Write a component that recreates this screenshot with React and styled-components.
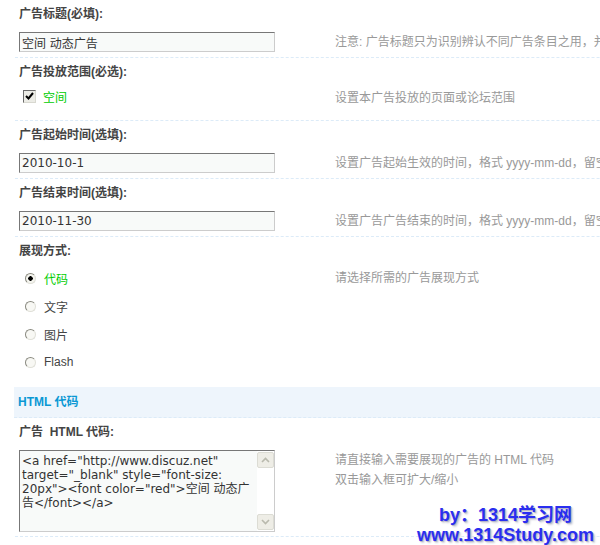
import React from 'react';
import styled, { createGlobalStyle } from 'styled-components';

const GlobalStyle = createGlobalStyle`
  html, body { margin: 0; padding: 0; background: #fff; }
  body {
    font-family: "Liberation Sans", "Noto Sans CJK SC", sans-serif;
    font-size: 12px;
    color: #333;
    overflow: hidden;
  }
`;

const timeTip = (what) =>
    `设置广告${what}的时间，格式 yyyy-mm-dd，留空为不限制${what.slice(-2)}时间`;

const modes = [
    { name: '代码', on: true },
    { name: '文字' },
    { name: '图片' },
    { name: 'Flash' },
];

const App = () => (
    <Page>
        <GlobalStyle />
        <Form>
            <Section>
                <Title>广告标题(必填):</Title>
                <Field>
                    <Control><TextInput defaultValue="空间 动态广告" /></Control>
                    <Hint>注意: 广告标题只为识别辨认不同广告条目之用，并不会在广告中显示</Hint>
                </Field>
            </Section>

            <Section>
                <Title>广告投放范围(必选):</Title>
                <Field>
                    <Choices $top={2} $bottom={14}>
                        <Choice $h={20}>
                            <CheckBox>
                                <svg width="9" height="8" viewBox="0 0 9 8">
                                    <path d="M1 4 L3.5 6.5 L8 1" stroke="#000" strokeWidth="2" fill="none" />
                                </svg>
                            </CheckBox>
                            <ChoiceText $on>空间</ChoiceText>
                        </Choice>
                    </Choices>
                    <Hint $top={4}>设置本广告投放的页面或论坛范围</Hint>
                </Field>
            </Section>

            <Section>
                <Title>广告起始时间(选填):</Title>
                <Field>
                    <Control><TextInput defaultValue="2010-10-1" /></Control>
                    <Hint>{timeTip('起始生效')}</Hint>
                </Field>
            </Section>

            <Section>
                <Title>广告结束时间(选填):</Title>
                <Field>
                    <Control><TextInput defaultValue="2010-11-30" /></Control>
                    <Hint>{timeTip('广告结束')}</Hint>
                </Field>
            </Section>

            <Section $noBorder>
                <Title>展现方式:</Title>
                <Field>
                    <Choices $top={1} $bottom={11}>
                        {modes.map((m) => (
                            <Choice key={m.name} $h={28}>
                                <Radio $on={m.on} />
                                <ChoiceText $on={m.on}>{m.name}</ChoiceText>
                            </Choice>
                        ))}
                    </Choices>
                    <Hint $top={5}>请选择所需的广告展现方式</Hint>
                </Field>
            </Section>

            <Band>HTML 代码</Band>

            <Section>
                <Title>广告&nbsp; HTML 代码:</Title>
                <Field>
                    <Control $bottom={4}>
                        <CodeBox>
                            <CodeArea
                                spellCheck={false}
                                defaultValue={'<a href="http://www.discuz.net" target="_blank" style="font-size: 20px"><font color="red">空间 动态广告</font></a>'}
                            />
                            <ScrollBar>
                                <ScrollButton>
                                    <svg width="9" height="6" viewBox="0 0 9 6">
                                        <path d="M1 5 L4.5 1.5 L8 5" stroke="#b9b9ad" strokeWidth="1.6" fill="none" />
                                    </svg>
                                </ScrollButton>
                                <ScrollButton>
                                    <svg width="9" height="6" viewBox="0 0 9 6">
                                        <path d="M1 1 L4.5 4.5 L8 1" stroke="#b9b9ad" strokeWidth="1.6" fill="none" />
                                    </svg>
                                </ScrollButton>
                            </ScrollBar>
                        </CodeBox>
                    </Control>
                    <Hint>
                        请直接输入需要展现的广告的 HTML 代码<br />
                        双击输入框可扩大/缩小
                    </Hint>
                </Field>
            </Section>
        </Form>

        <Watermark>
            <span>by：1314学习网</span>
            <span>www.1314Study.com</span>
        </Watermark>
    </Page>
);

export default App;

const Page = styled.div`
position: relative;
width: 600px;
height: 545px;
overflow: hidden;
padding-left: 15px;
box-sizing: border-box;
`;

const Form = styled.div`
width: 760px;
`;

const Section = styled.div`
border-bottom: ${(p) => (p.$noBorder ? 'none' : '1px dashed #dcebf8')};
`;

const Title = styled.div`
padding: 5px 4px 3px;
line-height: 18px;
font-weight: bold;
color: #444;
`;

const Field = styled.div`
display: grid;
grid-template-columns: 320px 1fr;
`;

const Control = styled.div`
padding: 6px 0 ${(p) => (p.$bottom ?? 5)}px 4px;
display: flex;
`;

const TextInput = styled.input`
width: 256px;
height: 20px;
box-sizing: border-box;
margin: 0;
padding: 0 2px;
border: 1px solid;
border-color: #777 #ccc #ccc #777;
background: #f8faf9;
font-family: "DejaVu Sans", "Noto Sans CJK SC", sans-serif;
font-size: 12px;
color: #333;
outline: none;
`;

const Hint = styled.div`
padding-top: ${(p) => p.$top ?? 6}px;
line-height: 20px;
color: #999;
white-space: nowrap;
`;

const Choices = styled.div`
padding: ${(p) => p.$top}px 0 ${(p) => p.$bottom}px 4px;
display: flex;
flex-direction: column;
`;

const Choice = styled.div`
height: ${(p) => p.$h}px;
display: flex;
align-items: center;
`;

const CheckBox = styled.span`
margin-left: 4px;
width: 13px;
height: 13px;
box-sizing: border-box;
border: 1px solid;
border-color: #6b6b6b #d8d8d0 #d8d8d0 #6b6b6b;
background: #ecece6;
display: flex;
align-items: center;
justify-content: center;
`;

const Radio = styled.span`
margin-left: 6px;
margin-right: 1px;
width: 11px;
height: 11px;
box-sizing: border-box;
border-radius: 50%;
border: 1px solid;
border-color: #8a8a80 #e0e0d8 #e0e0d8 #8a8a80;
background: ${(p) => (p.$on ? 'radial-gradient(circle, #000 0 2px, #f4f4ee 2.5px)' : '#f8f8f4')};
`;

const ChoiceText = styled.span`
margin-left: 7px;
color: ${(p) => (p.$on ? '#00cc00' : '#444')};
`;

const Band = styled.div`
height: 30px;
line-height: 30px;
padding-left: 4px;
margin-left: -1px;
background: #eef5fc;
color: #0a98d4;
font-weight: bold;
border-bottom: 1px dashed #dcebf8;
`;

const CodeBox = styled.div`
width: 256px;
height: 82px;
box-sizing: border-box;
border: 1px solid;
border-color: #777 #ccc #ccc #777;
background: #f8faf9;
display: flex;
`;

const CodeArea = styled.textarea`
flex: 1;
margin: 0;
padding: 3px 3px 2px 2px;
border: none;
background: transparent;
resize: none;
overflow: hidden;
font-family: "DejaVu Sans", "Noto Sans CJK SC", sans-serif;
font-size: 12px;
line-height: 14px;
color: #333;
outline: none;
`;

const ScrollBar = styled.div`
width: 17px;
background: #fff;
display: flex;
flex-direction: column;
justify-content: space-between;
padding: 1px 0;
`;

const ScrollButton = styled.div`
height: 16px;
box-sizing: border-box;
border: 1px solid #dcdcd4;
border-radius: 2px;
background: #eeede6;
display: flex;
align-items: center;
justify-content: center;
`;

const Watermark = styled.div`
position: absolute;
right: 6px;
bottom: 0;
display: flex;
flex-direction: column;
align-items: center;
font-family: "Liberation Sans", "Noto Sans CJK SC", sans-serif;
font-weight: bold;
font-size: 18px;
line-height: 20px;
color: #2a2ef0;
text-shadow: 1px 1px 0 #b8b8c8, 2px 2px 2px #d0d0d8;
`;
